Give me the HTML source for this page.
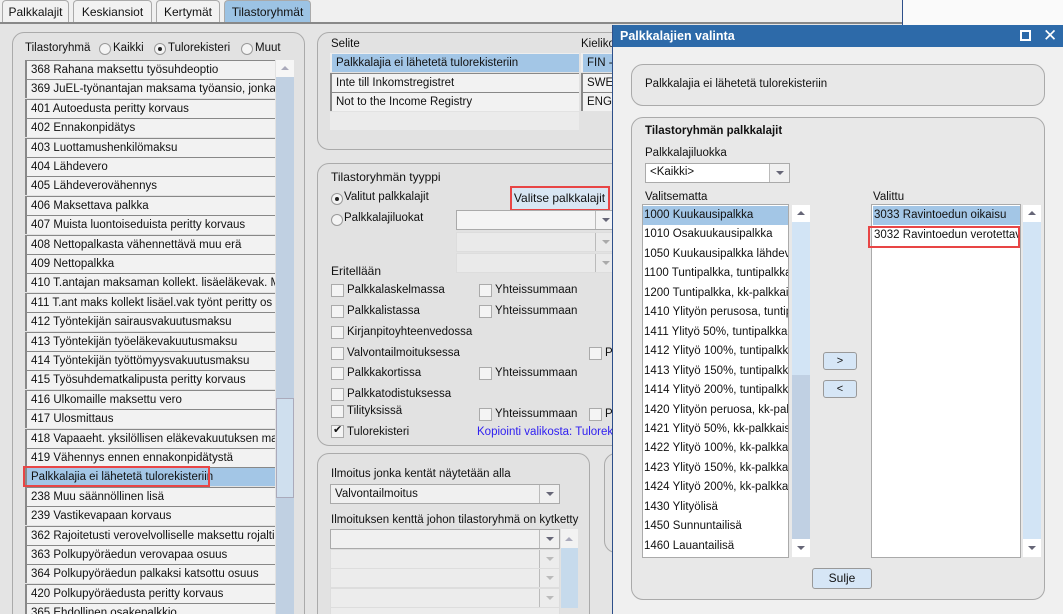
<!DOCTYPE html>
<html style="width:1063px;height:614px;overflow:hidden"><head><meta charset="utf-8"><style>
*{box-sizing:border-box;margin:0;padding:0}
body{width:1063px;height:614px;overflow:hidden;background:#e4e4e4;font-family:"Liberation Sans",Arial,sans-serif;font-size:12px;color:#111;position:relative}
.a{position:absolute}
.tab{position:absolute;top:0;height:23px;border:1px solid #aaa;border-bottom:none;background:#f2f2f2;border-radius:4px 4px 0 0;text-align:center;line-height:22px;font-size:12px}
.box{position:absolute;border:1px solid #aaa;border-radius:12px;background:#e2e2e2}
.row{position:absolute;height:19px;background:#f2f2f2;border-left:2px solid #888;border-top:1px solid #888;line-height:18px;padding-left:4px;white-space:nowrap;overflow:hidden;font-size:11.5px}
.cb{position:absolute;width:13px;height:13px;border:1px solid #aaa;background:#f4f4f4}
.lbl{position:absolute;white-space:nowrap;font-size:11.5px}
.combo{position:absolute;height:20px;border:1px solid #aaa;background:#f0f0f0}
.combo .ar{position:absolute;right:0;top:0;width:20px;height:18px;border-left:1px solid #bbb}
.tri{position:absolute;width:0;height:0;border-left:4px solid transparent;border-right:4px solid transparent;border-top:4px solid #667}
.triu{position:absolute;width:0;height:0;border-left:4px solid transparent;border-right:4px solid transparent;border-bottom:4px solid #aab}
.red{position:absolute;border:2px solid #e84545}
.li{position:absolute;left:2px;height:19px;line-height:19px;padding-left:1px;white-space:nowrap;overflow:hidden;font-size:11.5px}
.rad{position:absolute;width:12px;height:12px;border:1px solid #999;border-radius:50%;background:#f4f4f4}
.btn{position:absolute;border:1px solid #999;border-radius:3px;background:#d6e6f6;text-align:center}
</style></head><body>
<div class="a" style="left:0;top:0;width:902px;height:23px;background:#f0f0f0"></div>
<div class="a" style="left:902px;top:0;width:161px;height:25px;background:#fafafa;border-left:1px solid #2d4f8a"></div>
<div class="tab" style="left:2px;width:67px">Palkkalajit</div>
<div class="tab" style="left:73px;width:79px">Keskiansiot</div>
<div class="tab" style="left:156px;width:64px">Kertymät</div>
<div class="tab" style="left:224px;width:87px;background:#9cc3e4">Tilastoryhmät</div>
<div class="a" style="left:0;top:22px;width:902px;height:2px;background:#888"></div>

<div class="box" style="left:12px;top:32px;width:293px;height:600px"></div>
<div class="lbl" style="left:25px;top:42px">Tilastoryhmä</div>
<div class="rad" style="left:99px;top:43px"></div><div class="lbl" style="left:113px;top:42px">Kaikki</div>
<div class="rad" style="left:154px;top:43px"></div><div class="a" style="left:158px;top:47px;width:4px;height:4px;border-radius:50%;background:#222"></div><div class="lbl" style="left:168px;top:42px">Tulorekisteri</div>
<div class="rad" style="left:241px;top:43px"></div><div class="lbl" style="left:255px;top:42px">Muut</div>
<div class="a" style="left:276px;top:60px;width:18px;height:554px;background:#c0d0e2"></div>
<div class="a" style="left:276px;top:60px;width:18px;height:17px;background:#f6f6f6"></div>
<div class="triu" style="left:281px;top:66px"></div>
<div class="a" style="left:276px;top:398px;width:18px;height:100px;background:#cfdfee;border:1px solid #aab"></div>
<div id="L"></div>

<div class="box" style="left:317px;top:32px;width:320px;height:118px"></div>
<div class="lbl" style="left:331px;top:38px">Selite</div>
<div class="lbl" style="left:581px;top:38px">Kieliko</div>
<div class="row" style="left:330px;top:53px;width:249px;background:#a3c6e6;border-color:#eee">Palkkalajia ei lähetetä tulorekisteriin</div>
<div class="row" style="left:330px;top:73px;width:249px">Inte till Inkomstregistret</div>
<div class="row" style="left:330px;top:92px;width:249px">Not to the Income Registry</div>
<div class="a" style="left:330px;top:112px;width:249px;height:18px;background:#ebebeb"></div>
<div class="row" style="left:581px;top:53px;width:40px;background:#a3c6e6;border-color:#eee">FIN -</div>
<div class="row" style="left:581px;top:73px;width:40px">SWE</div>
<div class="row" style="left:581px;top:92px;width:40px">ENG</div>

<div class="box" style="left:317px;top:163px;width:320px;height:283px"></div>
<div class="lbl" style="left:331px;top:170px;font-size:12px">Tilastoryhmän tyyppi</div>
<div class="rad" style="left:331px;top:193px"></div><div class="a" style="left:335px;top:197px;width:4px;height:4px;border-radius:50%;background:#222"></div>
<div class="lbl" style="left:344px;top:191px">Valitut palkkalajit</div>
<div class="btn" style="left:511px;top:188px;width:97px;height:22px;line-height:20px;background:#d8e6f3;border:none">Valitse palkkalajit</div>
<div class="red" style="left:510px;top:186px;width:100px;height:25px"></div>
<div class="rad" style="left:331px;top:214px"></div><div class="lbl" style="left:344px;top:212px">Palkkalajiluokat</div>
<div class="combo" style="left:456px;top:210px;width:160px;background:#f4f4f4"><div class="ar"><div class="tri" style="left:6px;top:7px"></div></div></div>
<div class="combo" style="left:456px;top:232px;width:160px;background:#eaeaea;border-color:#ddd"><div class="ar"><div class="tri" style="left:6px;top:7px;border-top-color:#aaa"></div></div></div>
<div class="combo" style="left:456px;top:253px;width:160px;background:#eaeaea;border-color:#ddd"><div class="ar"><div class="tri" style="left:6px;top:7px;border-top-color:#aaa"></div></div></div>
<div class="lbl" style="left:331px;top:264px;font-size:12px">Eritellään</div>
<div class="cb" style="left:331px;top:284px"></div><div class="lbl" style="left:347px;top:284px">Palkkalaskelmassa</div>
<div class="cb" style="left:479px;top:284px"></div><div class="lbl" style="left:495px;top:284px">Yhteissummaan</div>
<div class="cb" style="left:331px;top:305px"></div><div class="lbl" style="left:347px;top:305px">Palkkalistassa</div>
<div class="cb" style="left:479px;top:305px"></div><div class="lbl" style="left:495px;top:305px">Yhteissummaan</div>
<div class="cb" style="left:331px;top:326px"></div><div class="lbl" style="left:347px;top:326px">Kirjanpitoyhteenvedossa</div>
<div class="cb" style="left:331px;top:347px"></div><div class="lbl" style="left:347px;top:347px">Valvontailmoituksessa</div>
<div class="cb" style="left:589px;top:347px"></div><div class="lbl" style="left:605px;top:347px">P</div>
<div class="cb" style="left:331px;top:367px"></div><div class="lbl" style="left:347px;top:367px">Palkkakortissa</div>
<div class="cb" style="left:479px;top:367px"></div><div class="lbl" style="left:495px;top:367px">Yhteissummaan</div>
<div class="cb" style="left:331px;top:388px"></div><div class="lbl" style="left:347px;top:388px">Palkkatodistuksessa</div>
<div class="cb" style="left:331px;top:405px"></div><div class="lbl" style="left:347px;top:405px">Tilityksissä</div>
<div class="cb" style="left:479px;top:408px"></div><div class="lbl" style="left:495px;top:408px">Yhteissummaan</div>
<div class="cb" style="left:589px;top:408px"></div><div class="lbl" style="left:605px;top:408px">P</div>
<div class="cb" style="left:331px;top:425px"></div><div class="lbl" style="left:333px;top:423px;font-size:11px">✔</div><div class="lbl" style="left:347px;top:426px">Tulorekisteri</div>
<div class="lbl" style="left:477px;top:426px;color:#3020f0">Kopiointi valikosta: Tulorek</div>

<div class="box" style="left:317px;top:453px;width:273px;height:180px"></div>
<div class="box" style="left:604px;top:453px;width:40px;height:100px"></div>
<div class="lbl" style="left:331px;top:468px">Ilmoitus jonka kentät näytetään alla</div>
<div class="combo" style="left:330px;top:484px;width:230px"><div class="lbl" style="left:4px;top:3px">Valvontailmoitus</div><div class="ar"><div class="tri" style="left:6px;top:7px"></div></div></div>
<div class="lbl" style="left:331px;top:514px">Ilmoituksen kenttä johon tilastoryhmä on kytketty</div>
<div class="combo" style="left:330px;top:529px;width:230px"><div class="ar"><div class="tri" style="left:6px;top:7px"></div></div></div>
<div class="combo" style="left:330px;top:549px;width:230px;border-color:#ddd;background:#ececec"><div class="ar"><div class="tri" style="left:6px;top:7px;border-top-color:#bbb"></div></div></div>
<div class="combo" style="left:330px;top:568px;width:230px;border-color:#ddd;background:#ececec"><div class="ar"><div class="tri" style="left:6px;top:7px;border-top-color:#bbb"></div></div></div>
<div class="combo" style="left:330px;top:588px;width:230px;border-color:#ddd;background:#ececec"><div class="ar"><div class="tri" style="left:6px;top:7px;border-top-color:#bbb"></div></div></div>
<div class="combo" style="left:330px;top:607px;width:230px;border-color:#ddd;background:#ececec"></div>
<div class="a" style="left:561px;top:529px;width:17px;height:20px;background:#f2f2f2"></div>
<div class="triu" style="left:565px;top:537px"></div>
<div class="a" style="left:561px;top:548px;width:17px;height:60px;background:#c6daec"></div>

<div class="a" style="left:612px;top:25px;width:451px;height:589px;background:#f0f0f0;border-left:1px solid #2d4f8a"></div>
<div class="a" style="left:613px;top:25px;width:450px;height:22px;background:#2d6aa9;color:#fff;font-weight:bold;font-size:12.5px;line-height:22px;padding-left:7px">Palkkalajien valinta</div>
<div class="a" style="left:1020px;top:30px;width:11px;height:11px;border:2px solid #fff"></div>
<div class="a" style="left:1043px;top:25px;color:#fff;font-size:17px;line-height:22px">✕</div>
<div class="box" style="left:631px;top:64px;width:414px;height:42px;background:#e8e8e8"></div>
<div class="lbl" style="left:645px;top:78px">Palkkalajia ei lähetetä tulorekisteriin</div>
<div class="box" style="left:631px;top:117px;width:414px;height:483px;background:#e8e8e8"></div>
<div class="lbl" style="left:645px;top:125px;font-weight:bold">Tilastoryhmän palkkalajit</div>
<div class="lbl" style="left:645px;top:147px">Palkkalajiluokka</div>
<div class="combo" style="left:645px;top:163px;width:145px;background:#fff"><div class="lbl" style="left:4px;top:2px">&lt;Kaikki&gt;</div><div class="ar" style="background:#f0f0f0"><div class="tri" style="left:6px;top:7px"></div></div></div>
<div class="lbl" style="left:645px;top:191px">Valitsematta</div>
<div class="lbl" style="left:873px;top:191px">Valittu</div>
<div class="a" style="left:642px;top:204px;width:147px;height:354px;background:#fff;border:1px solid #aaa"></div>
<div id="D"></div>
<div class="a" style="left:792px;top:205px;width:18px;height:352px;background:#c0d0e3"></div>
<div class="a" style="left:792px;top:222px;width:18px;height:153px;background:#d2e4f5"></div>
<div class="a" style="left:792px;top:205px;width:18px;height:17px;background:#fff"></div><div class="triu" style="left:797px;top:211px;border-bottom-color:#667"></div>
<div class="a" style="left:792px;top:539px;width:18px;height:18px;background:#fff"></div><div class="tri" style="left:797px;top:546px"></div>
<div class="a" style="left:871px;top:204px;width:150px;height:354px;background:#fff;border:1px solid #aaa"></div>
<div class="li" style="left:873px;top:206px;width:147px;background:#a3c6e6">3033 Ravintoedun oikaisu</div>
<div class="li" style="left:873px;top:226px;width:147px">3032 Ravintoedun verotettav</div>
<div class="red" style="left:868px;top:226px;width:152px;height:22px"></div>
<div class="a" style="left:1023px;top:205px;width:18px;height:352px;background:#d2e4f5"></div>
<div class="a" style="left:1023px;top:205px;width:18px;height:17px;background:#fff"></div><div class="triu" style="left:1028px;top:211px;border-bottom-color:#667"></div>
<div class="a" style="left:1023px;top:539px;width:18px;height:18px;background:#fff"></div><div class="tri" style="left:1028px;top:546px"></div>
<div class="btn" style="left:823px;top:352px;width:34px;height:18px;line-height:16px;font-size:11px">&gt;</div>
<div class="btn" style="left:823px;top:380px;width:34px;height:18px;line-height:16px;font-size:11px">&lt;</div>
<div class="btn" style="left:812px;top:568px;width:60px;height:21px;line-height:19px">Sulje</div>

<script>
var L=["368 Rahana maksettu työsuhdeoptio","369 JuEL-työnantajan maksama työansio, jonka","401 Autoedusta peritty korvaus","402 Ennakonpidätys","403 Luottamushenkilömaksu","404 Lähdevero","405 Lähdeverovähennys","406 Maksettava palkka","407 Muista luontoiseduista peritty korvaus","408 Nettopalkasta vähennettävä muu erä","409 Nettopalkka","410 T.antajan maksaman kollekt. lisäeläkevak. M","411 T.ant maks kollekt lisäel.vak työnt peritty os","412 Työntekijän sairausvakuutusmaksu","413 Työntekijän työeläkevakuutusmaksu","414 Työntekijän työttömyysvakuutusmaksu","415 Työsuhdematkalipusta peritty korvaus","416 Ulkomaille maksettu vero","417 Ulosmittaus","418 Vapaaeht. yksilöllisen eläkevakuutuksen ma","419 Vähennys ennen ennakonpidätystä","Palkkalajia ei lähetetä tulorekisteriin","238 Muu säännöllinen lisä","239 Vastikevapaan korvaus","362 Rajoitetusti verovelvolliselle maksettu rojalti","363 Polkupyöräedun verovapaa osuus","364 Polkupyöräedun palkaksi katsottu osuus","420 Polkupyöräedusta peritty korvaus","365 Ehdollinen osakepalkkio"];
var h="";for(var i=0;i<L.length;i++){var t=Math.round(60+i*19.4);h+='<div class="row" style="left:25px;top:'+t+'px;width:250px'+(i==21?';background:#a3c6e6':'')+'">'+L[i]+'</div>';}
h+='<div class="red" style="left:23px;top:466px;width:187px;height:21px"></div>';
document.getElementById("L").innerHTML=h;
var D=["1000 Kuukausipalkka","1010 Osakuukausipalkka","1050 Kuukausipalkka lähdev","1100 Tuntipalkka, tuntipalkka","1200 Tuntipalkka, kk-palkkai","1410 Ylityön perusosa, tuntip","1411 Ylityö 50%, tuntipalkka","1412 Ylityö 100%, tuntipalkk","1413 Ylityö 150%, tuntipalkk","1414 Ylityö 200%, tuntipalkk","1420 Ylityön peruosa, kk-pal","1421 Ylityö 50%, kk-palkkais","1422 Ylityö 100%, kk-palkka","1423 Ylityö 150%, kk-palkka","1424 Ylityö 200%, kk-palkka","1430 Ylityölisä","1450 Sunnuntailisä","1460 Lauantailisä"];
h="";for(i=0;i<D.length;i++){var t=Math.round(206+i*19.45);h+='<div class="li" style="left:643px;top:'+t+'px;width:145px'+(i==0?';background:#a3c6e6':'')+'">'+D[i]+'</div>';}
document.getElementById("D").innerHTML=h;
</script>
</body></html>
